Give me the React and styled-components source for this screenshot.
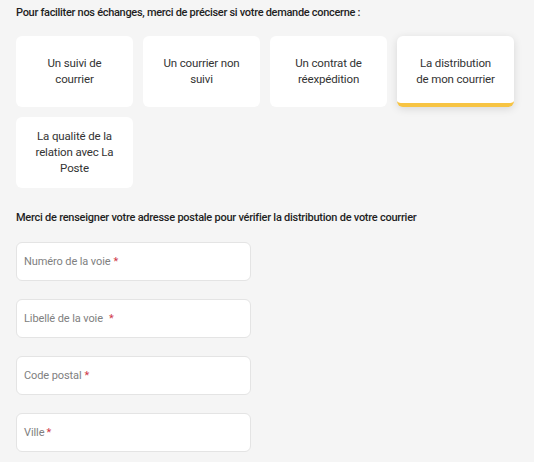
import React from "react";
import styled, { createGlobalStyle } from "styled-components";

const Global = createGlobalStyle`
  html, body { margin: 0; padding: 0; background: #f5f5f5; }
  body { font-family: Roboto, "Noto Sans", Arial, sans-serif; color: #222; }
`;

const Page = styled.div`
  padding: 5px 20px 10px 16px;
  display: flex;
  flex-direction: column;
`;

const Heading = styled.div`
  font-size: 11px;
  font-weight: 500;
  line-height: 16px;
  letter-spacing: ${p => p.$ls}px;
  color: #1f1f1f;
  margin-bottom: ${p => p.$mb}px;
`;

const CardGrid = styled.div`
  display: grid;
  grid-template-columns: repeat(4, 117px);
  column-gap: 10px;
  row-gap: 10px;
  margin-bottom: 22px;
`;

const Card = styled.button`
  all: unset;
  box-sizing: border-box;
  height: 71px;
  background: #fff;
  border-radius: 6px;
  display: flex;
  align-items: center;
  justify-content: center;
  text-align: center;
  padding: 2px 17px 0;
  font-size: 11.5px;
  letter-spacing: -0.15px;
  line-height: 16px;
  color: #333;
  cursor: pointer;
  border-bottom: 4px solid ${p => (p.$active ? "#f7c443" : "transparent")};
  box-shadow: ${p => (p.$active ? "0 2px 8px rgba(0,0,0,0.12)" : "none")};
`;

const Fields = styled.div`
  display: flex;
  flex-direction: column;
  gap: 18px;
`;

const Field = styled.div`
  box-sizing: border-box;
  width: 235px;
  height: 39px;
  background: #fff;
  border: 1px solid #e4e4e4;
  border-radius: 6px;
  display: flex;
  align-items: center;
  padding: 0 7px;
  font-size: 11px;
  letter-spacing: -0.1px;
  color: #808080;
`;

const Star = styled.span`
  color: #d0394a;
  margin-left: ${p => p.$gap}px;
`;

const options = [
  "Un suivi de courrier",
  "Un courrier non suivi",
  "Un contrat de réexpédition",
  "La distribution de mon courrier",
  "La qualité de la relation avec La Poste",
];

const fields = [
  ["Numéro de la voie", 3],
  ["Libellé de la voie", 6],
  ["Code postal", 3],
  ["Ville", 2],
];

export default function App() {
  return (
    <>
      <Global />
      <Page>
        <Heading $mb={15} $ls={-0.3}>
          Pour faciliter nos échanges, merci de préciser si votre demande concerne :
        </Heading>
        <CardGrid>
          {options.map((o, i) => (
            <Card key={o} $active={i === 3}>{o}</Card>
          ))}
        </CardGrid>
        <Heading $mb={16} $ls={-0.25}>
          Merci de renseigner votre adresse postale pour vérifier la distribution de votre courrier
        </Heading>
        <Fields>
          {fields.map(([f, g]) => (
            <Field key={f}>
              {f}
              <Star $gap={g}>*</Star>
            </Field>
          ))}
        </Fields>
      </Page>
    </>
  );
}
